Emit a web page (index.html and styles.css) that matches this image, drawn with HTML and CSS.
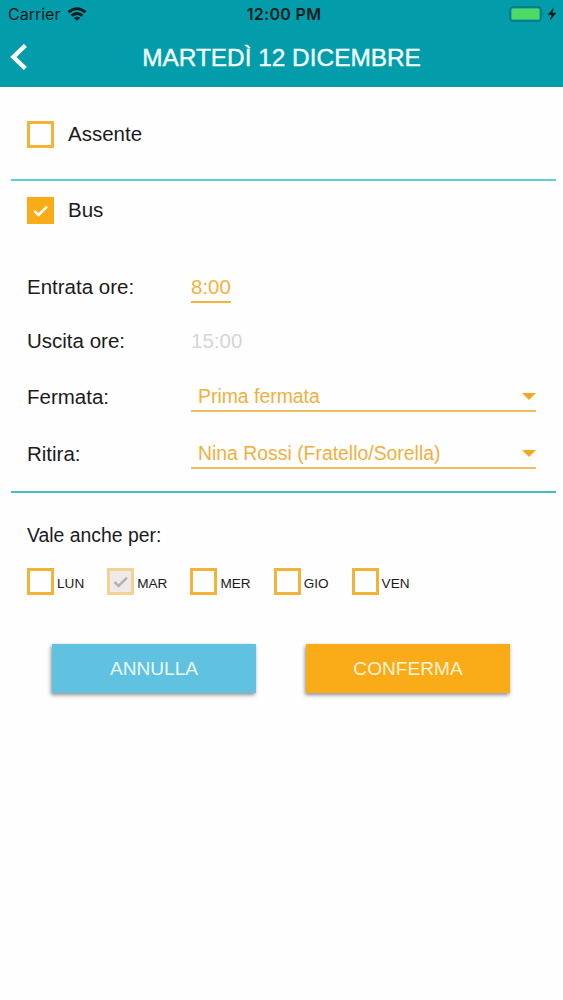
FILE: index.html
```html
<!DOCTYPE html>
<html lang="it">
    <head>
        <meta charset="utf-8">
        <title>Martedì 12 dicembre</title>
        <meta name="viewport" content="width=device-width, initial-scale=1.0">
        <link rel="stylesheet" href="styles.css">
    </head>
    <body>
        <header>
            <div class="status">
                <div class="carrier">
                    <span>Carrier</span>
                    <svg width="20" height="14" viewBox="0 0 20 14" fill="none" stroke="#081c1f" stroke-width="2.8">
                        <path d="M1.5 5.2Q10 -2 18.5 5.2"/>
                        <path d="M4.6 8.7Q10 4.2 15.4 8.7"/>
                        <path d="M10 13.8L6.9 10.9Q10 8.5 13.1 10.9Z" fill="#081c1f" stroke="none"/>
                    </svg>
                </div>
                <span class="time">12:00 PM</span>
                <svg class="battery" width="48" height="16" viewBox="0 0 48 16">
                    <rect x="1" y="1" width="31" height="14" rx="3" fill="none" stroke="#087681" stroke-width="1.4"/>
                    <rect x="2.5" y="2.5" width="28" height="11" rx="1.5" fill="#4cd964"/>
                    <path d="M33.6 5.8Q35.4 8 33.6 10.2Z" fill="#087681"/>
                    <path d="M45 1.2L38.8 8.8H42.6L40.6 15L47.3 6.7H43.6Z" fill="#081c1f"/>
                </svg>
            </div>
            <div class="navbar">
                <svg class="back" width="18" height="28" viewBox="0 0 18 28">
                    <path d="M15.4 1.5L3.4 13L15.4 24.5" fill="none" stroke="#fff" stroke-width="4.4"/>
                </svg>
                <h1>MARTEDÌ 12 DICEMBRE</h1>
            </div>
        </header>
        <main>
            <section class="absent">
                <label class="check"><span class="box"></span><span class="name">Assente</span></label>
            </section>
            <section class="bus">
                <label class="check">
                    <span class="box checked">
                        <svg width="16" height="12" viewBox="0 0 16 12"><path d="M1.5 6L5.5 10L14 1.7"/></svg>
                    </span>
                    <span class="name">Bus</span>
                </label>
                <div class="fields">
                    <span>Entrata ore:</span>
                    <div><span class="hour">8:00</span></div>
                    <span>Uscita ore:</span>
                    <div><span class="hour disabled">15:00</span></div>
                    <span class="label">Fermata:</span>
                    <div class="select">Prima fermata<i class="arrow"></i></div>
                    <span class="label">Ritira:</span>
                    <div class="select">Nina Rossi (Fratello/Sorella)<i class="arrow"></i></div>
                </div>
            </section>
            <section class="repeat">
                <p>Vale anche per:</p>
                <div class="days">
                    <label><span class="box"></span><span class="day">LUN</span></label>
                    <label>
                        <span class="box locked">
                            <svg width="16" height="12" viewBox="0 0 16 12"><path d="M1.5 6L5.5 10L14 1.7"/></svg>
                        </span>
                        <span class="day">MAR</span>
                    </label>
                    <label><span class="box"></span><span class="day">MER</span></label>
                    <label><span class="box"></span><span class="day">GIO</span></label>
                    <label><span class="box"></span><span class="day">VEN</span></label>
                </div>
            </section>
            <div class="buttons">
                <button class="cancel">ANNULLA</button>
                <button class="confirm">CONFERMA</button>
            </div>
        </main>
    </body>
</html>
```
FILE: styles.css
```css
* {
    margin: 0;
    padding: 0;
    box-sizing: border-box;
}
body {
    min-height: 100vh;
    font-family: "Liberation Sans", sans-serif;
    font-size: 20.5px;
    color: #1b1b1d;
    background: #fefefe;
}
svg {
    display: block;
}
header {
    height: 87px;
    background: #029cab;
}
.status {
    display: grid;
    grid-template-columns: 1fr auto 1fr;
    align-items: center;
    height: 28px;
    padding: 0 5px 0 8px;
    font-family: Inter, sans-serif;
    font-size: 16px;
    color: #081c1f;
}
.carrier {
    display: flex;
    align-items: center;
    gap: 7px;
}
.time {
    padding-left: 2px;
    font-weight: 600;
    letter-spacing: 0.3px;
}
.battery {
    justify-self: end;
    margin-right: 1px;
}
.navbar {
    display: grid;
    grid-template-columns: 18px 1fr 18px;
    align-items: center;
    height: 59px;
    padding: 0 10px;
}
h1 {
    font-size: 24.4px;
    font-weight: normal;
    text-align: center;
    color: #f2ffff;
    -webkit-text-stroke: 0.4px #f2ffff;
}
main {
    padding: 0 7px 0 11px;
}
section {
    padding: 0 20px 0 16px;
}
.absent {
    height: 94px;
    padding-top: 34px;
    border-bottom: 2px solid #63cdd7;
}
.check {
    display: flex;
    align-items: center;
    gap: 14px;
    height: 27px;
}
.name {
    padding-bottom: 2px;
}
.box {
    display: flex;
    align-items: center;
    justify-content: center;
    flex: none;
    width: 27px;
    height: 27px;
    border: 3px solid #f3b238;
}
.box path {
    fill: none;
    stroke: #fff;
    stroke-width: 2.5;
}
.checked {
    background: #f9ab18;
    border-color: #f9ab18;
}
.locked {
    background: #eeeaea;
    border-color: #f6d291;
}
.locked path {
    stroke: #b4b2b3;
}
.bus {
    height: 312px;
    padding-top: 16px;
    border-bottom: 2px solid #45bcc5;
}
.fields {
    display: grid;
    grid-template-columns: 164px 1fr;
    grid-template-rows: 54px 53px 57px 57px;
    align-items: center;
    margin-top: 36px;
}
.label {
    padding-top: 2px;
}
.hour {
    display: inline-block;
    height: 32px;
    line-height: 32px;
    color: #f6b23c;
    border-bottom: 2px solid #f6b23c;
}
.disabled {
    color: #d6d5d8;
    border-color: transparent;
}
.select {
    display: flex;
    align-items: center;
    justify-content: space-between;
    height: 32px;
    padding: 2px 0 0 7px;
    font-size: 19.4px;
    line-height: 28px;
    color: #f0b03f;
    border-bottom: 2px solid #f1bd62;
}
.arrow {
    border: 7px solid transparent;
    border-top-color: #f2a921;
    border-bottom: 0;
    margin-top: 2px;
}
.repeat {
    padding-top: 30px;
}
.repeat p {
    font-size: 19.4px;
    line-height: 24px;
}
.days {
    display: flex;
    gap: 23px;
    margin-top: 21px;
    font-size: 13.6px;
}
.days label {
    display: flex;
    align-items: center;
    gap: 3px;
}
.day {
    padding-top: 4px;
}
.buttons {
    display: flex;
    gap: 50px;
    margin: 49px 0 0 41px;
}
button {
    width: 204px;
    height: 49px;
    font-family: inherit;
    font-size: 19.1px;
    color: #fff;
    border: 0;
    box-shadow: -1px 2px 4px rgba(0, 0, 0, 0.45);
}
.cancel {
    color: #e9fbff;
    background: #60c1e0;
}
.confirm {
    color: #fff4d5;
    background: #faab18;
}
```
